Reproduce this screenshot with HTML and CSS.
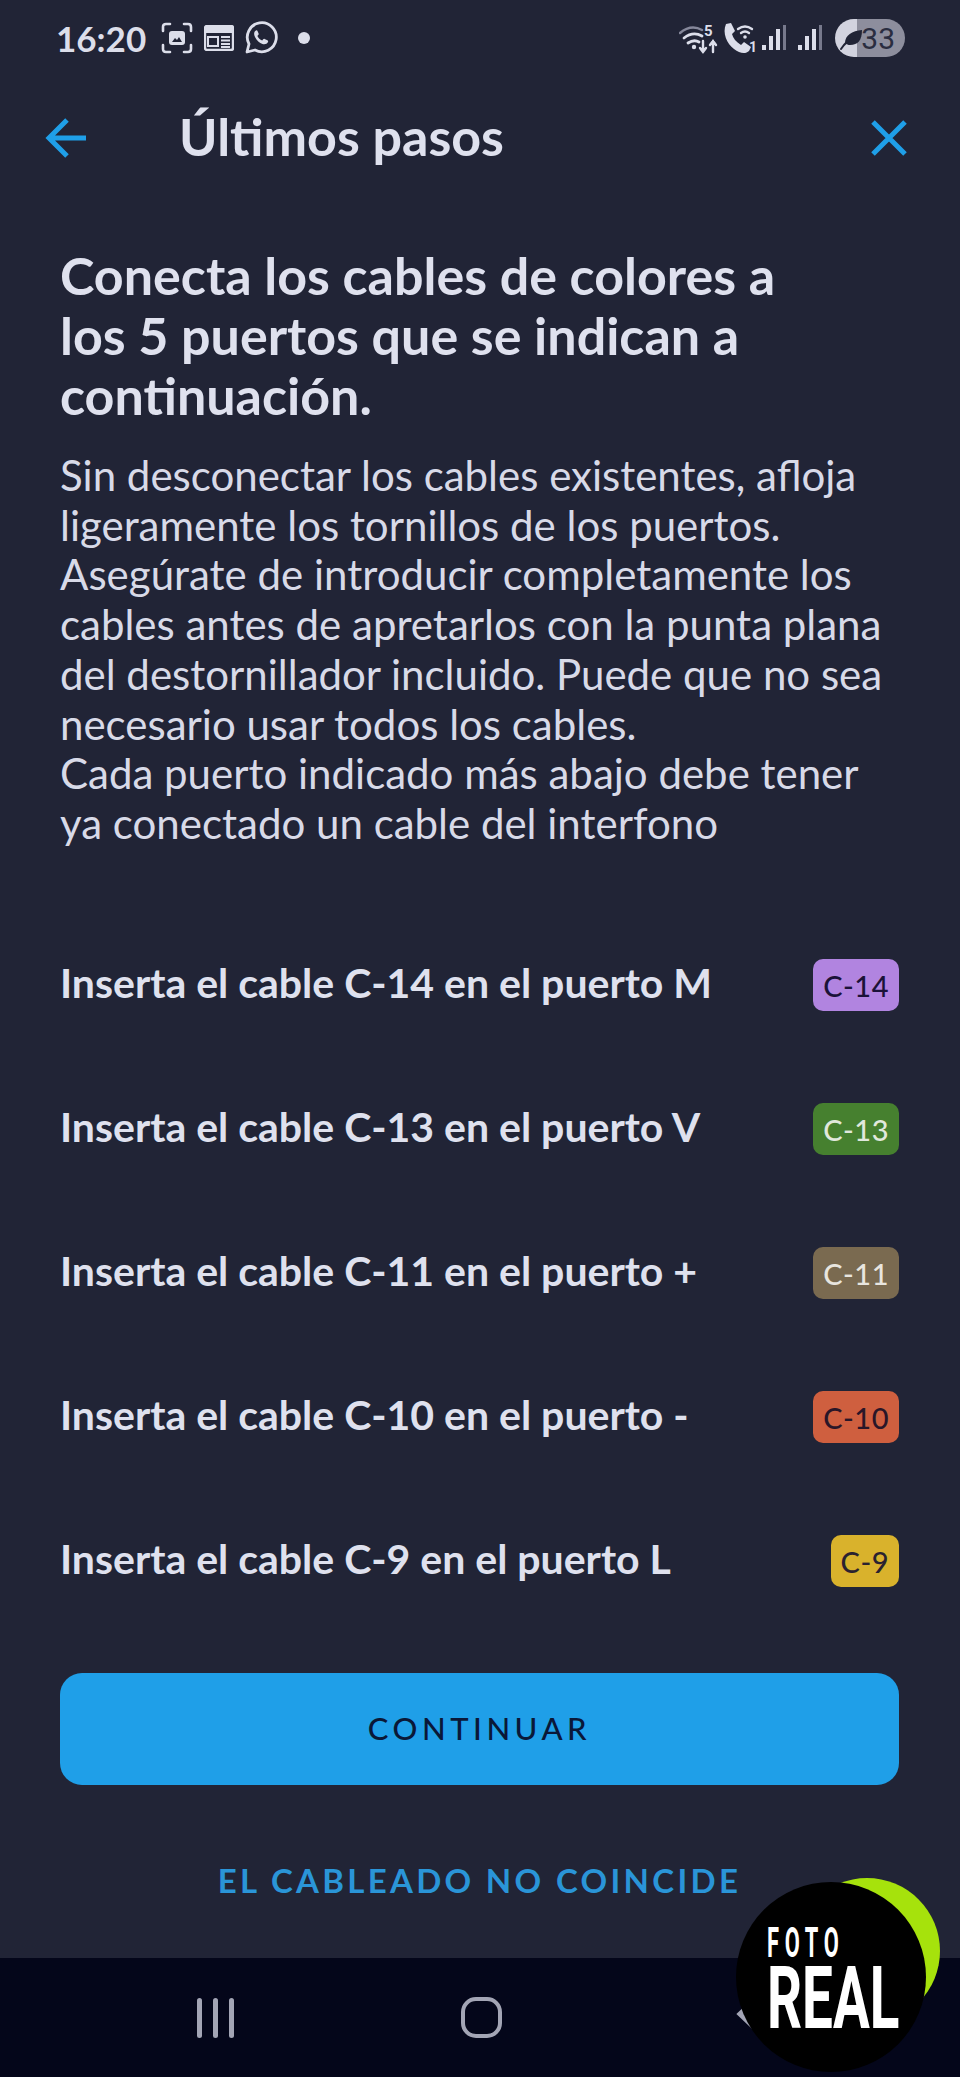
FILE: index.html
```html
<!DOCTYPE html>
<html lang="es">
  <head>
    <meta charset="UTF-8" />
    <meta name="viewport" content="width=device-width, initial-scale=1.0" />
    <title>Últimos pasos</title>
    <link rel="stylesheet" href="styles.css">
  </head>
  <body>
    <div class="phone">
      <div class="statusBar">
        <div class="statusLeft">
          <span class="clock">16:20</span>
          <svg class="icoShot" viewBox="0 0 32 32" fill="none" stroke="#dcdeea" stroke-width="2.6" stroke-linecap="round">
            <path d="M2 9V5q0-3 3-3h4M23 2h4q3 0 3 3v4M30 23v4q0 3-3 3h-4M9 30H5q-3 0-3-3v-4" />
            <rect x="8" y="9" width="16" height="14" rx="3" fill="#dcdeea" stroke="none" />
            <path d="M11 20l3-4 2 2 2-3 3 5z" fill="#212436" stroke="none" />
          </svg>
          <svg class="icoNews" viewBox="0 0 30 26">
            <rect x="1" y="1" width="28" height="24" rx="2" fill="none" stroke="#dcdeea" stroke-width="2.4" />
            <rect x="1" y="1" width="28" height="7" fill="#dcdeea" />
            <rect x="4" y="12" width="10" height="9" fill="none" stroke="#dcdeea" stroke-width="2" />
            <path d="M17 12h9M17 15.500h9M17 19h9M17 22h9" stroke="#dcdeea" stroke-width="1.800" />
          </svg>
          <svg class="icoChat" viewBox="0 0 34 34" fill="none">
            <path d="M3 31l2-8A14.500 14.500 0 1 1 11 29z" stroke="#dcdeea" stroke-width="2.800" stroke-linejoin="round" />
            <path d="M12 9.500c-2 1-2.500 3.500-1 6.500 1.800 3.500 4.500 6 7.500 7 2.500.8 4.500-.2 5.500-2 .4-.8 0-1.400-.6-1.700l-2.800-1.400c-.6-.3-1-.1-1.400.4l-1 1.200c-2.200-.8-3.800-2.400-4.800-4.500l1-1.200c.3-.4.4-.8.2-1.200l-1.200-2.800c-.3-.7-.9-.8-1.400-.3z" fill="#dcdeea" />
          </svg>
          <span class="statusDot"></span>
        </div>
        <div class="statusRight">
          <svg class="icoWifi" viewBox="0 0 40 36" fill="none" stroke="#dcdeea" stroke-linecap="round">
            <path d="M1 13q11-9 22-3" stroke="#85879a" stroke-width="2.500" />
            <path d="M5 18q9-7 18-2M9 23q6-4 11-1" stroke-width="2.800" />
            <circle cx="15" cy="27" r="2.200" fill="#dcdeea" stroke="none" />
            <path d="M24 21v11M21 28l3 4 3-4M34 32V21M31 25l3-4 3 4" stroke-width="2.400" />
            <text x="25" y="16" class="wifiNum">5</text>
          </svg>
          <svg class="icoCall" viewBox="0 0 36 36" fill="none" stroke="#dcdeea" stroke-linecap="round">
            <path d="M5 4l5-1 4 8-3 3c1 4 4 8 9 11l3-3 7 5-2 4c-3 3-9 3-15-2C6 24 1 13 5 4z" fill="#dcdeea" stroke="none" />
            <path d="M17 9q7-5 14 0M20 13q4-3 8 0" stroke-width="2.400" />
            <circle cx="24" cy="17" r="1.800" fill="#dcdeea" stroke="none" />
            <text x="28" y="32" class="wifiOne">1</text>
          </svg>
          <svg class="icoSignal" viewBox="0 0 25 26">
            <rect x="0" y="20" width="4" height="5" fill="#dcdeea" />
            <rect x="7" y="11" width="4" height="14" fill="#dcdeea" />
            <rect x="14" y="4" width="4" height="21" fill="#dcdeea" />
            <rect x="21" y="0" width="3" height="25" fill="#77798c" />
          </svg>
          <svg class="icoSignal icoSignalTwo" viewBox="0 0 25 26">
            <rect x="0" y="20" width="4" height="5" fill="#dcdeea" />
            <rect x="7" y="11" width="4" height="14" fill="#dcdeea" />
            <rect x="14" y="4" width="4" height="21" fill="#dcdeea" />
            <rect x="21" y="0" width="3" height="25" fill="#77798c" />
          </svg>
          <div class="battery">
            <svg class="icoLeaf" viewBox="0 0 24 22" fill="#212436">
              <path d="M5 15C5 7 12 3 22 2c0 10-4 15-12 15-2 0-3-.5-5-2z" />
              <path d="M1 21q6-9 14-12" fill="none" stroke="#212436" stroke-width="2" stroke-linecap="round" />
            </svg>
            <span class="batteryNum">33</span>
          </div>
        </div>
      </div>

      <div class="appBar">
        <svg class="icoBack" viewBox="0 0 42 42" fill="none" stroke="#1f9fe8" stroke-width="5" stroke-linejoin="miter">
          <path d="M41 21H5M22 3L4 21l18 18" />
        </svg>
        <h1 class="appTitle">Últimos pasos</h1>
        <svg class="icoClose" viewBox="0 0 36 36" fill="none" stroke="#1f9fe8" stroke-width="5">
          <path d="M2 2l32 32M34 2L2 34" />
        </svg>
      </div>

      <div class="content">
        <h2 class="stepTitle">Conecta los cables de colores a<br />los 5 puertos que se indican a<br />continuación.</h2>
        <p class="stepText">Sin desconectar los cables existentes, afloja<br />ligeramente los tornillos de los puertos.<br />Asegúrate de introducir completamente los<br />cables antes de apretarlos con la punta plana<br />del destornillador incluido. Puede que no sea<br />necesario usar todos los cables.<br />Cada puerto indicado más abajo debe tener<br />ya conectado un cable del interfono</p>

        <div class="cableList">
          <div class="cableRow">
            <span class="cableText">Inserta el cable C-14 en el puerto M</span>
            <span class="tag tagPurple">C-14</span>
          </div>
          <div class="cableRow">
            <span class="cableText">Inserta el cable C-13 en el puerto V</span>
            <span class="tag tagGreen">C-13</span>
          </div>
          <div class="cableRow">
            <span class="cableText">Inserta el cable C-11 en el puerto +</span>
            <span class="tag tagBrown">C-11</span>
          </div>
          <div class="cableRow">
            <span class="cableText">Inserta el cable C-10 en el puerto -</span>
            <span class="tag tagOrange">C-10</span>
          </div>
          <div class="cableRow">
            <span class="cableText">Inserta el cable C-9 en el puerto L</span>
            <span class="tag tagYellow">C-9</span>
          </div>
        </div>

        <button class="btnContinue" type="button">CONTINUAR</button>
        <a class="linkMismatch">EL CABLEADO NO COINCIDE</a>
      </div>

      <div class="navBar">
        <svg class="navRecents" viewBox="0 0 42 40" fill="#a3a5b5">
          <rect x="0" y="0" width="5" height="40" rx="2.500" />
          <rect x="16" y="0" width="5" height="40" rx="2.500" />
          <rect x="32" y="0" width="5" height="40" rx="2.500" />
        </svg>
        <span class="navHome"></span>
        <svg class="navBack" viewBox="0 0 28 44" fill="none" stroke="#a3a5b5" stroke-width="5" stroke-linecap="round">
          <path d="M24 3L4 22l20 19" />
        </svg>
      </div>

      <svg class="fotoBadge" viewBox="0 0 210 200">
        <circle cx="131" cy="73" r="73" fill="#a6e20c" />
        <circle cx="95" cy="99" r="95" fill="#000" />
        <text class="fotoSmall" transform="translate(31 79) scale(.52 1)">FOTO</text>
        <text class="fotoBig" transform="translate(31 150) scale(.63 1)">REAL</text>
      </svg>
    </div>
  </body>
</html>
```

FILE: styles.css
```css
* {
  box-sizing: border-box;
}
body {
  margin: 0;
  background-color: #212436;
  font-family: "Lato", "Liberation Sans", sans-serif;
}
.phone {
  position: relative;
  width: 960px;
  height: 2077px;
  display: flex;
  flex-direction: column;
  overflow: hidden;
  background-color: #212436;
  color: #dfe1ee;
}

/* status bar */
.statusBar {
  height: 76px;
  padding: 0 55px 0 56px;
  display: flex;
  align-items: center;
  justify-content: space-between;
}
.statusLeft,
.statusRight {
  display: flex;
  align-items: center;
}
.clock {
  font-size: 35px;
  font-weight: 700;
  width: 105px;
  color: #dcdeea;
}
.icoShot {
  width: 32px;
  height: 32px;
}
.icoNews {
  width: 30px;
  height: 26px;
  margin-left: 11px;
}
.icoChat {
  width: 34px;
  height: 34px;
  margin-left: 10px;
}
.statusDot {
  width: 12px;
  height: 12px;
  border-radius: 50%;
  margin-left: 20px;
  background-color: #dcdeea;
}
.icoWifi {
  width: 40px;
  height: 36px;
}
.icoCall {
  width: 36px;
  height: 36px;
  margin-left: 2px;
}
.wifiNum {
  font-family: "Roboto", sans-serif;
  font-size: 15px;
  font-weight: 700;
  fill: #dcdeea;
  stroke: none;
}
.wifiOne {
  font-family: "Roboto", sans-serif;
  font-size: 14px;
  font-weight: 700;
  fill: #dcdeea;
  stroke: none;
}
.icoSignal {
  width: 25px;
  height: 26px;
  margin-left: 5px;
}
.icoSignalTwo {
  margin-left: 11px;
}
.battery {
  position: relative;
  width: 70px;
  height: 38px;
  margin-left: 12px;
  border-radius: 19px;
  display: flex;
  align-items: center;
  justify-content: flex-end;
  padding-right: 10px;
  background: linear-gradient(to right, #d2d3df 0, #d2d3df 22px, #8d8e9d 22px, #8d8e9d 100%);
}
.icoLeaf {
  position: absolute;
  left: 5px;
  top: 9px;
  width: 24px;
  height: 22px;
}
.batteryNum {
  font-family: "Roboto", sans-serif;
  font-size: 30px;
  color: #2a2d40;
}

/* app bar */
.appBar {
  height: 124px;
  padding: 0 53px 0 45px;
  display: flex;
  align-items: center;
}
.icoBack {
  width: 42px;
  height: 42px;
}
.appTitle {
  flex: 1;
  margin: -4px 0 0 92px;
  font-size: 52px;
  font-weight: 700;
  color: #dfe1ee;
}
.icoClose {
  width: 36px;
  height: 36px;
}

/* content */
.content {
  flex: 1;
  padding: 45px 61px 0 60px;
  display: flex;
  flex-direction: column;
}
.stepTitle {
  margin: 0;
  font-size: 52px;
  line-height: 60px;
  font-weight: 700;
}
.stepText {
  margin: 26px 0 0;
  font-size: 42px;
  line-height: 49.700px;
  font-weight: 400;
  color: #d8dae8;
}
.cableList {
  margin-top: 64.400px;
}
.cableRow {
  height: 144px;
  display: flex;
  align-items: center;
  justify-content: space-between;
  font-size: 41px;
  font-weight: 700;
}
.cableText {
  padding-bottom: 5px;
}
.tag {
  height: 52px;
  padding: 0 10px;
  display: flex;
  align-items: center;
  border-radius: 10px;
  font-size: 29px;
  font-weight: 500;
  letter-spacing: .5px;
}
.tagPurple {
  background-color: #b184e0;
  color: #1b1238;
}
.tagGreen {
  background-color: #46802f;
  color: #e0e8dc;
}
.tagBrown {
  background-color: #7a6a50;
  color: #e8e5df;
}
.tagOrange {
  background-color: #cf5f3f;
  color: #2a1628;
}
.tagYellow {
  background-color: #d9b22c;
  color: #2a2230;
}
.btnContinue {
  height: 112px;
  margin-top: 40px;
  padding-bottom: 3px;
  border: none;
  border-radius: 22px;
  background-color: #1f9fe8;
  color: #0a1838;
  font-family: inherit;
  font-size: 31px;
  font-weight: 500;
  letter-spacing: 4.500px;
}
.linkMismatch {
  margin-top: 65px;
  text-align: center;
  font-size: 33px;
  line-height: 60px;
  font-weight: 700;
  letter-spacing: 3.300px;
  color: #2a95d8;
}

/* nav bar */
.navBar {
  height: 119px;
  padding: 0 0 0 197px;
  display: flex;
  align-items: center;
  background-color: #04061a;
}
.navRecents {
  width: 42px;
  height: 40px;
}
.navHome {
  width: 41px;
  height: 41px;
  margin-left: 222px;
  border: 4px solid #a3a5b5;
  border-radius: 15px;
}
.navBack {
  width: 28px;
  height: 44px;
  margin: -8px 0 0 234px;
}

/* watermark */
.fotoBadge {
  position: absolute;
  left: 736px;
  top: 1878px;
  width: 210px;
  height: 200px;
}
.fotoSmall {
  font-family: "Roboto", sans-serif;
  font-size: 42px;
  font-weight: 700;
  letter-spacing: 11px;
  fill: #fff;
}
.fotoBig {
  font-family: "Roboto", sans-serif;
  font-size: 87px;
  font-weight: 700;
  fill: #fff;
}
```
